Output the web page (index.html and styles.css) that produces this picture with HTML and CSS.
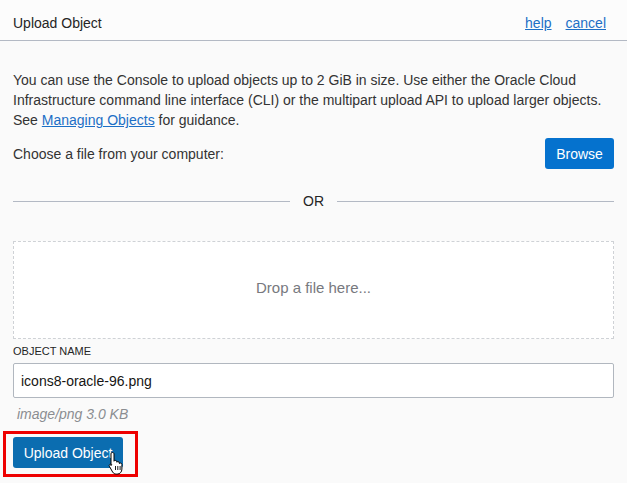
FILE: index.html
```html
<!DOCTYPE html>
<html>
<head>
<meta charset="utf-8">
<link rel="stylesheet" href="styles.css">
</head>
<body>
<div class="panel">
  <header class="head">
    <h1 class="title">Upload Object</h1>
    <nav class="links"><a href="#">help</a><a href="#">cancel</a></nav>
  </header>
  <main class="content">
    <p class="intro">You can use the Console to upload objects up to 2 GiB in size. Use either the Oracle Cloud Infrastructure command line interface (CLI) or the multipart upload API to upload larger objects. See <a href="#">Managing Objects</a> for guidance.</p>
    <div class="choose">
      <span>Choose a file from your computer:</span>
      <button class="btn browse">Browse</button>
    </div>
    <div class="or"><span class="rule"></span><span class="or-text">OR</span><span class="rule"></span></div>
    <div class="drop">Drop a file here...</div>
    <label class="lbl">OBJECT NAME</label>
    <div class="input">icons8-oracle-96.png</div>
    <div class="meta">image/png 3.0 KB</div>
    <div class="highlight">
      <button class="btn upload">Upload Object</button>
      <svg class="cursor" width="16" height="24" viewBox="0 0 16 24">
        <path d="M4.5 1.5c.9 0 1.5.6 1.5 1.5v7.2c.3-.5.8-.8 1.400-.8.8 0 1.4.6 1.4 1.4v.4c.3-.4.7-.6 1.2-.6.8 0 1.4.6 1.4 1.4v.6c.3-.3.6-.5 1.1-.5.8 0 1.4.6 1.4 1.4v4.6c0 2.7-1.9 5-4.7 5H8.3c-1.6 0-2.8-.8-3.7-2.1L1.4 15.3c-.4-.7-.2-1.5.4-1.9.6-.4 1.4-.3 1.9.3L3 14.6V3c0-.9.6-1.5 1.5-1.5z" fill="#fff" stroke="#000" stroke-width="1"/>
        <path d="M7.5 15v4M9.8 15v4M12.1 15v4" stroke="#000" stroke-width="0.9"/>
      </svg>
    </div>
  </main>
</div>
</body>
</html>
```
FILE: styles.css
```css
* { box-sizing: border-box; }
html, body { margin: 0; padding: 0; }
body {
  width: 627px;
  height: 483px;
  overflow: hidden;
  background: #fafafa;
  font-family: "Liberation Sans", Arial, sans-serif;
  font-size: 14px;
  color: #333;
}
.head {
  height: 41px;
  display: flex;
  align-items: center;
  justify-content: space-between;
  padding: 5px 21px 0 13px;
  background: #fcfcfc;
  border-bottom: 1px solid #b3b9c4;
}
.title {
  margin: 0;
  font-size: 14px;
  font-weight: normal;
  color: #252525;
}
.links { display: flex; gap: 14px; }
.links a, .intro a { color: #1c6fc6; text-decoration: underline; }
.content {
  padding: 29px 13px 0 13px;
  display: flex;
  flex-direction: column;
}
.intro {
  margin: 0;
  line-height: 20px;
  color: #333;
}
.choose {
  margin-top: 8px;
  display: flex;
  align-items: center;
  justify-content: space-between;
}
.btn {
  font-family: "Liberation Sans", Arial, sans-serif;
  font-size: 14px;
  color: #fff;
  border: none;
  border-radius: 3px;
  height: 31px;
  padding: 0 10px;
}
.browse {
  background: #0572ce;
  width: 69px;
  padding: 0;
}
.or {
  margin-top: 24px;
  display: flex;
  align-items: center;
  height: 16px;
}
.rule { flex: 1; height: 1px; background: #b3b9c4; }
.or-text { padding: 0 13px; color: #252525; font-size: 14px; }
.drop {
  margin-top: 32px;
  height: 98px;
  background: #fff;
  border: 1px dashed #cfd2d6;
  display: flex;
  align-items: center;
  justify-content: center;
  padding-bottom: 6px;
  color: #77797e;
  font-size: 15px;
}
.lbl {
  margin-top: 6px;
  font-size: 11px;
  line-height: 13px;
  color: #252525;
}
.input {
  margin-top: 5px;
  height: 35px;
  background: #fff;
  border: 1px solid #b1b7bf;
  border-radius: 2px;
  padding: 0 7px;
  display: flex;
  align-items: center;
  font-size: 14px;
  color: #161513;
}
.meta {
  margin-top: 7px;
  padding-left: 4px;
  font-style: italic;
  color: #8a8d91;
  font-size: 14px;
  line-height: 18px;
}
.highlight {
  position: relative;
  margin: 8px 0 0 -10px;
  width: 135px;
  height: 46px;
  border: 3px solid #ee0000;
  padding: 3px 0 0 7px;
}
.upload {
  background: #0b6db0;
  width: 110px;
  padding: 0;
}
.cursor {
  position: absolute;
  left: 102px;
  top: 17px;
}
```
